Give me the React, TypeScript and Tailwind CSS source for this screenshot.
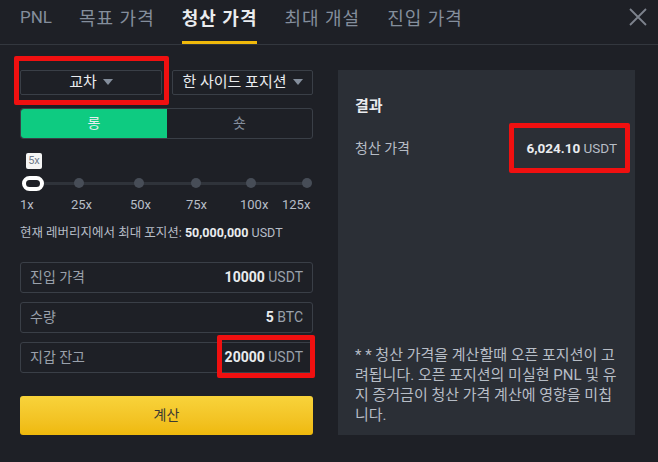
import React from 'react';

const font = { fontFamily: 'Roboto, "Noto Sans CJK KR", sans-serif' };

const tabs = ['PNL', '목표 가격', '청산 가격', '최대 개설', '진입 가격'];
const marks = ['1x', '25x', '50x', '75x', '100x', '125x'];

const Caret = () => (
  <svg width="10" height="7" viewBox="0 0 10 7" className="ml-[6px]">
    <path d="M0 0 H10 L5 6 Z" fill="#848e9c" />
  </svg>
);

const Field = ({ label, value, unit }: { label: string; value: string; unit: string }) => (
  <div className="flex h-[31px] items-center justify-between rounded-[3px] border border-[#3a3f47] px-[9px] text-[14px]">
    <span className="text-[#9aa1ab]">{label}</span>
    <span>
      <span className="font-bold text-[#eaecef]">{value}</span>
      <span className="text-[#9aa1ab]"> {unit}</span>
    </span>
  </div>
);

export default function App() {
  return (
    <div className="h-[462px] w-[658px] overflow-hidden bg-[#1e2026] text-[#eaecef]" style={font}>
      {/* tabs */}
      <div className="flex h-[45px] items-stretch border-b border-[#33373e] pl-[20px] pr-[11px]">
        {tabs.map((t, i) => (
          <div
            key={t}
            className={`flex items-center ${i === 0 ? 'mr-[27px] text-[17px]' : 'mr-[27px] text-[18px] tracking-[1px]'} ${
              i === 2
                ? 'border-b-[3px] border-[#f0b90b] pb-[5px] font-bold text-[#eaecef]'
                : 'pb-[8px] text-[#848e9c]'
            }`}
          >
            {t}
          </div>
        ))}
        <div className="ml-auto flex items-center pb-[10px]">
          <svg width="18" height="18" viewBox="0 0 18 18">
            <path d="M1 1 L17 17 M17 1 L1 17" stroke="#7d838d" strokeWidth="1.8" />
          </svg>
        </div>
      </div>

      <div className="flex gap-[25px] pl-[20px] pt-[25px]">
        {/* left column */}
        <div className="flex w-[293px] flex-col">
          <div className="flex gap-[10px]">
            <div className="relative w-[142px]">
              <div className="flex h-[25px] items-center justify-center rounded-[2px] border border-[#3a3f47] text-[15px] text-[#eaecef]">
                교차 <Caret />
              </div>
              <div className="absolute -left-[6px] -right-[7px] -top-[14px] -bottom-[10px] rounded-[2px] border-[5px] border-[#f01010]" />
            </div>
            <div className="flex h-[25px] flex-1 items-center justify-center rounded-[2px] border border-[#3a3f47] text-[15px] text-[#eaecef]">
              한 사이드 포지션 <Caret />
            </div>
          </div>

          <div className="mt-[13px] flex h-[31px] rounded-[3px] border border-[#3a3f47] text-[14px]">
            <div className="flex w-[146px] items-center justify-center rounded-l-[3px] bg-[#0ecb81] text-[#eaecef]">롱</div>
            <div className="flex flex-1 items-center justify-center text-[#848e9c]">숏</div>
          </div>

          {/* slider */}
          <div className="mt-[14px] ml-[6px] flex h-[16px] w-[16px] items-center justify-center rounded-[2px] bg-[#f5f5f5] text-[11px] text-[#707a8a]">
            5x
          </div>
          <div className="relative mt-[6px] grid h-[16px] grid-cols-[54px_60px_57px_55px_56px_auto] items-center">
            <div className="absolute left-[12px] right-[2px] top-[7px] h-[3px] bg-[#2f333a]" />
            <div className="relative z-10 ml-[2px] h-[15px] w-[22px] rounded-full border-[4px] border-white bg-[#1e2026]" />
            {[0, 1, 2, 3, 4].map((d) => (
              <div key={d} className="relative z-10 h-[10px] w-[10px] rounded-full bg-[#474d57]" />
            ))}
          </div>
          <div className="mt-[4px] grid grid-cols-[51px_59px_56px_54px_42px_auto] text-[13px] text-[#b7bdc6]">
            {marks.map((m) => (
              <span key={m}>{m}</span>
            ))}
          </div>
          <div className="mt-[9px] text-[12.5px] text-[#b7bdc6]">
            현재 레버리지에서 최대 포지션: <span className="font-bold text-[#eaecef]">50,000,000</span> USDT
          </div>

          <div className="mt-[20px] flex flex-col gap-[9px]">
            <Field label="진입 가격" value="10000" unit="USDT" />
            <Field label="수량" value="5" unit="BTC" />
            <div className="relative">
              <Field label="지갑 잔고" value="20000" unit="USDT" />
              <div className="absolute -bottom-[5px] left-[197px] -right-[2px] -top-[7px] rounded-[2px] border-[5px] border-[#f01010]" />
            </div>
          </div>

          <button className="mt-[23px] h-[39px] rounded-[3px] bg-gradient-to-b from-[#f8d33a] to-[#efb90b] text-[14px] text-[#3c3a32]">
            계산
          </button>
        </div>

        {/* right panel */}
        <div className="flex h-[365px] w-[297px] flex-col bg-[#2b2f36] px-[17px] pt-[25px]">
          <div className="text-[15px] font-bold text-[#eaecef]">결과</div>
          <div className="mt-[20px] flex items-center justify-between text-[14px]">
            <span className="text-[#b7bdc6]">청산 가격</span>
            <span className="relative pr-[1px] text-[13.5px]">
              <span className="font-bold text-[#eaecef]">6,024.10</span>
              <span className="text-[#b7bdc6]"> USDT</span>
              <span className="absolute -bottom-[15px] -left-[17px] -right-[12px] -top-[15px] rounded-[2px] border-[5px] border-[#f01010]" />
            </span>
          </div>
          <div className="mt-auto mb-[10px] break-all text-[15px] leading-[20px] text-[#b7bdc6]">
            * * 청산 가격을 계산할때 오픈 포지션이 고려됩니다. 오픈 포지션의 미실현 PNL 및 유지 증거금이 청산 가격 계산에 영향을 미칩니다.
          </div>
        </div>
      </div>
    </div>
  );
}
